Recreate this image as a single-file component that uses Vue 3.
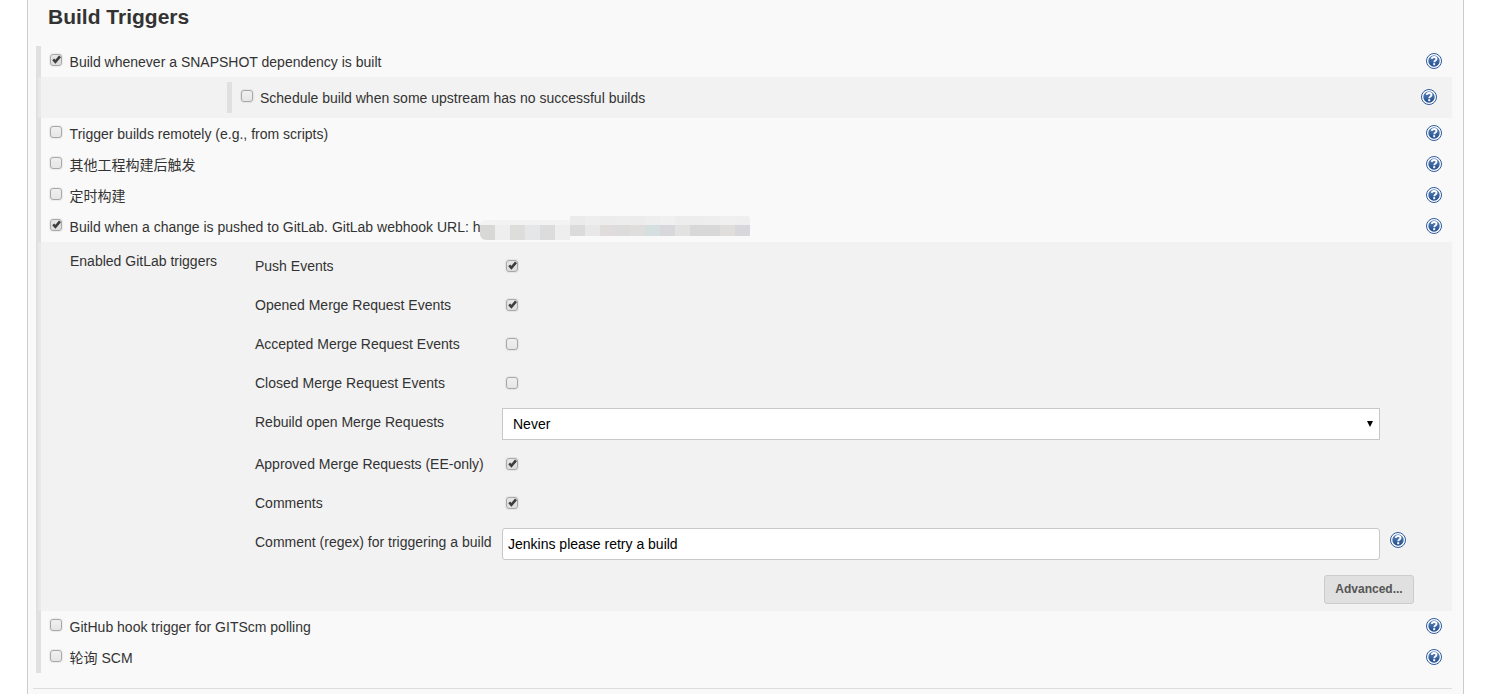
<script setup>
const topRows = [
  { label: 'Build whenever a SNAPSHOT dependency is built', checked: true },
]
const midRows = [
  { label: 'Trigger builds remotely (e.g., from scripts)', checked: false },
  { label: '其他工程构建后触发', checked: false },
  { label: '定时构建', checked: false },
  { label: 'Build when a change is pushed to GitLab. GitLab webhook URL: h', checked: true, masked: true },
]
const endRows = [
  { label: 'GitHub hook trigger for GITScm polling', checked: false },
  { label: '轮询 SCM', checked: false },
]
const upperEvents = [
  { label: 'Push Events', checked: true },
  { label: 'Opened Merge Request Events', checked: true },
  { label: 'Accepted Merge Request Events', checked: false },
  { label: 'Closed Merge Request Events', checked: false },
]
const lowerEvents = [
  { label: 'Approved Merge Requests (EE-only)', checked: true },
  { label: 'Comments', checked: true },
]
const bottomColors = ['#d8d8d6','#eeeeee','#dddddb','#e5e6e8','#dcdcdc','#eeeeee','#dbdbdb','#e8e8e8','#e0dcdc','#dcdcdc','#e0dedc','#d5dfe0','#d8d8dc','#e2e2e2','#d8d8d8','#d8d8d8','#dfdedb','#d8d8dc']
const topColors = ['#f3f3f3','#f2f2f2','#f2f2f2','#f2f2f2','#f2f2f2','#f3f3f3','#ebebeb','#eeeeee','#ececec','#ededed','#ececec','#eeeeee','#f0f0f0','#ededed','#ededed','#eeeeee','#f0f0f0','#efefef']
const mosaicTop = topColors.map((c, i) => ({ background: c, height: (i < 6 ? 5 : 9) + 'px' }))
const mosaicBottom = bottomColors.map((c, i) => ({ background: c, height: (i < 6 ? 15 : 11) + 'px' }))
</script>

<template>
  <div class="page">
    <h3 class="title">Build Triggers</h3>
    <div class="section">
      <div v-for="r in topRows" :key="r.label" class="row">
        <span class="box" :class="{ on: r.checked }">
          <svg v-if="r.checked" viewBox="0 0 11 11" width="11" height="11"><path d="M2.2 5.4 4.4 7.8 9 2.4" fill="none" stroke="#3d3d3d" stroke-width="2.6"/></svg>
        </span>
        <span class="label">{{ r.label }}</span>
        <svg class="help" viewBox="0 0 16 16" width="16" height="16"><defs><linearGradient id="hg" x1="0" y1="0" x2="0" y2="1"><stop offset="0" stop-color="#5f86bc"/><stop offset="1" stop-color="#1f4b8c"/></linearGradient></defs><circle cx="8" cy="8" r="7.5" fill="#fff" stroke="#2f5a9c"/><circle cx="8" cy="8" r="5.7" fill="url(#hg)"/><path d="M5.7 5.9C5.9 4.6 6.9 4 8.1 4 9.5 4 10.5 4.8 10.5 5.9 10.5 7.4 8.3 7.5 8.2 9.2" fill="none" stroke="#fff" stroke-width="1.8"/><rect x="7.2" y="10.2" width="2" height="2" fill="#fff"/></svg>
      </div>
      <div class="nested nested-sub">
        <div class="sub-inner">
          <span class="box"></span>
          <span class="label sub-label">Schedule build when some upstream has no successful builds</span>
        </div>
        <svg class="help" viewBox="0 0 16 16" width="16" height="16"><circle cx="8" cy="8" r="7.5" fill="#fff" stroke="#2f5a9c"/><circle cx="8" cy="8" r="5.7" fill="url(#hg)"/><path d="M5.7 5.9C5.9 4.6 6.9 4 8.1 4 9.5 4 10.5 4.8 10.5 5.9 10.5 7.4 8.3 7.5 8.2 9.2" fill="none" stroke="#fff" stroke-width="1.8"/><rect x="7.2" y="10.2" width="2" height="2" fill="#fff"/></svg>
      </div>
      <div v-for="r in midRows" :key="r.label" class="row">
        <span class="box" :class="{ on: r.checked }">
          <svg v-if="r.checked" viewBox="0 0 11 11" width="11" height="11"><path d="M2.2 5.4 4.4 7.8 9 2.4" fill="none" stroke="#3d3d3d" stroke-width="2.6"/></svg>
        </span>
        <span class="label">{{ r.label }}</span>
        <div v-if="r.masked" class="mosaic">
          <div class="mosaic-top"><i v-for="(s, i) in mosaicTop" :key="i" :style="s"></i></div>
          <div class="mosaic-bottom"><i v-for="(s, i) in mosaicBottom" :key="i" :style="s"></i></div>
        </div>
        <svg class="help" viewBox="0 0 16 16" width="16" height="16"><circle cx="8" cy="8" r="7.5" fill="#fff" stroke="#2f5a9c"/><circle cx="8" cy="8" r="5.7" fill="url(#hg)"/><path d="M5.7 5.9C5.9 4.6 6.9 4 8.1 4 9.5 4 10.5 4.8 10.5 5.9 10.5 7.4 8.3 7.5 8.2 9.2" fill="none" stroke="#fff" stroke-width="1.8"/><rect x="7.2" y="10.2" width="2" height="2" fill="#fff"/></svg>
      </div>
      <div class="nested nested-gitlab">
        <div class="gl-title">Enabled GitLab triggers</div>
        <div class="gl-form">
          <div v-for="e in upperEvents" :key="e.label" class="gl-row">
            <span class="gl-label">{{ e.label }}</span>
            <span class="gl-check"><span class="box" :class="{ on: e.checked }">
              <svg v-if="e.checked" viewBox="0 0 11 11" width="11" height="11"><path d="M2.2 5.4 4.4 7.8 9 2.4" fill="none" stroke="#3d3d3d" stroke-width="2.6"/></svg>
            </span></span>
          </div>
          <div class="gl-row gl-row-field">
            <span class="gl-label gl-label-field">Rebuild open Merge Requests</span>
            <div class="select-wrap">
              <select class="field select"><option>Never</option></select>
            </div>
          </div>
          <div v-for="e in lowerEvents" :key="e.label" class="gl-row">
            <span class="gl-label">{{ e.label }}</span>
            <span class="gl-check"><span class="box on">
              <svg viewBox="0 0 11 11" width="11" height="11"><path d="M2.2 5.4 4.4 7.8 9 2.4" fill="none" stroke="#3d3d3d" stroke-width="2.6"/></svg>
            </span></span>
          </div>
          <div class="gl-row gl-row-field">
            <span class="gl-label gl-label-field">Comment (regex) for triggering a build</span>
            <input class="field input" value="Jenkins please retry a build" />
            <svg class="help help-field" viewBox="0 0 16 16" width="16" height="16"><circle cx="8" cy="8" r="7.5" fill="#fff" stroke="#2f5a9c"/><circle cx="8" cy="8" r="5.7" fill="url(#hg)"/><path d="M5.7 5.9C5.9 4.6 6.9 4 8.1 4 9.5 4 10.5 4.8 10.5 5.9 10.5 7.4 8.3 7.5 8.2 9.2" fill="none" stroke="#fff" stroke-width="1.8"/><rect x="7.2" y="10.2" width="2" height="2" fill="#fff"/></svg>
          </div>
          <div class="gl-actions"><button class="adv">Advanced...</button></div>
        </div>
      </div>
      <div v-for="r in endRows" :key="r.label" class="row">
        <span class="box"></span>
        <span class="label">{{ r.label }}</span>
        <svg class="help" viewBox="0 0 16 16" width="16" height="16"><circle cx="8" cy="8" r="7.5" fill="#fff" stroke="#2f5a9c"/><circle cx="8" cy="8" r="5.7" fill="url(#hg)"/><path d="M5.7 5.9C5.9 4.6 6.9 4 8.1 4 9.5 4 10.5 4.8 10.5 5.9 10.5 7.4 8.3 7.5 8.2 9.2" fill="none" stroke="#fff" stroke-width="1.8"/><rect x="7.2" y="10.2" width="2" height="2" fill="#fff"/></svg>
      </div>
    </div>
    <div class="rule"></div>
  </div>
</template>

<style scoped>
.page {
  box-sizing: border-box;
  width: 1437px;
  height: 694px;
  margin-left: 27px;
  padding-left: 8px;
  padding-right: 11px;
  overflow: hidden;
  background: #f9f9f9;
  border-left: 1px solid #ccc;
  border-right: 1px solid #ccc;
  font-family: "Liberation Sans", "Noto Sans CJK SC", sans-serif;
  font-size: 14px;
  color: #333;
}
.title {
  margin: 0 0 0 12px;
  height: 46px;
  padding-top: 5px;
  box-sizing: border-box;
  font-size: 21px;
  line-height: 24px;
  font-weight: 700;
}
.section {
  border-left: 5px solid #e0e0e0;
}
.row {
  position: relative;
  display: flex;
  align-items: center;
  height: 31px;
  padding: 0 10px 0 9px;
  box-sizing: border-box;
}
.label {
  margin-left: 7.6px;
  line-height: 18px;
}
.sub-label {
  margin-left: 7px;
}
.box {
  box-sizing: border-box;
  flex: none;
  display: inline-flex;
  align-items: center;
  justify-content: center;
  width: 12px;
  height: 12px;
  margin-top: -4px;
  border: 1px solid #a8a8a8;
  border-radius: 3px;
  background: linear-gradient(#f0f0f0, #e6e6e6);
  box-shadow: 0 0 1px 1px rgba(0, 0, 0, 0.06);
}
.box.on {
  background: linear-gradient(#e6e6e6, #dddddd);
}
.box svg {
  flex: none;
}
.help {
  flex: none;
  margin-left: auto;
  margin-top: -2px;
}
.nested {
  box-sizing: border-box;
  margin-left: -3px;
  background: #f2f2f2;
  border-left: 3px solid #e8e8e8;
}
.nested-sub {
  display: flex;
  align-items: center;
  height: 41px;
  padding-left: 186px;
  padding-right: 15px;
}
.sub-inner {
  display: flex;
  align-items: center;
  height: 31px;
  padding-left: 9px;
  border-left: 5px solid #e0e0e0;
}
.nested-gitlab {
  display: flex;
  height: 369px;
  padding-left: 29px;
  padding-top: 4px;
}
.gl-title {
  width: 185px;
  flex: none;
  margin-top: 6px;
  line-height: 18px;
}
.gl-form {
  flex: none;
  width: 1159px;
}
.gl-row {
  display: flex;
  align-items: center;
  height: 39px;
}
.gl-row-field {
  height: 42px;
}
.gl-label {
  width: 247px;
  flex: none;
  white-space: nowrap;
}
.gl-label-field {
  margin-top: -2px;
}
.gl-check {
  display: inline-flex;
  padding-left: 4px;
}
.gl-check .box {
  margin-top: 0;
}
.field {
  box-sizing: border-box;
  width: 878px;
  height: 32px;
  background: #fff;
  border: 1px solid #c8c8c8;
  color: #000;
  font-family: "Liberation Sans", sans-serif;
  font-size: 14px;
  outline: none;
}
.select-wrap {
  position: relative;
  width: 878px;
  height: 32px;
  margin-top: 2px;
}
.select-wrap::after {
  content: "";
  position: absolute;
  right: 7px;
  top: 13px;
  border-left: 3px solid transparent;
  border-right: 3px solid transparent;
  border-top: 6px solid #000;
}
.select {
  appearance: none;
  display: block;
  padding-left: 10px;
  border-radius: 0;
}
.input {
  margin-top: 2px;
  padding-left: 5px;
  border-radius: 3px;
}
.help-field {
  margin-left: 10px;
  margin-top: -6px;
}
.gl-actions {
  display: flex;
  justify-content: flex-end;
  width: 1159px;
  margin-top: 11px;
}
.adv {
  box-sizing: border-box;
  width: 90px;
  height: 29px;
  padding: 0 0 2px;
  background: #e0e0e0;
  border: 1px solid #ccc;
  border-radius: 3px;
  color: #555;
  font-family: "Liberation Sans", sans-serif;
  font-size: 12px;
  font-weight: 700;
}
.mosaic {
  position: absolute;
  left: 439px;
  top: 5px;
  width: 270px;
  height: 24px;
}
.mosaic i {
  display: block;
  flex: 1;
}
.mosaic-top {
  display: flex;
  align-items: flex-end;
  height: 9px;
}
.mosaic-top i:first-child {
  border-top-left-radius: 5px;
}
.mosaic-top i:last-child {
  border-top-right-radius: 3px;
}
.mosaic-bottom {
  display: flex;
  align-items: flex-start;
  height: 15px;
}
.mosaic-bottom i:first-child {
  border-bottom-left-radius: 6px;
}
.rule {
  height: 1px;
  margin: 15px 0 0 -3px;
  background: #ddd;
}
</style>
